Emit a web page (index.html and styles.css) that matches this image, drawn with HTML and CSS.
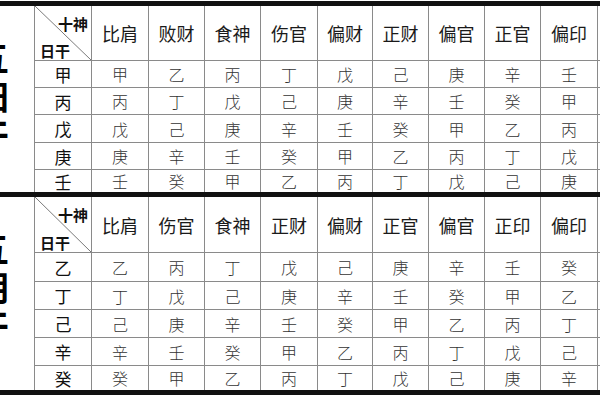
FILE: index.html
```html
<!DOCTYPE html>
<html lang="zh">
<head>
<meta charset="utf-8">
<link rel="stylesheet" href="styles.css">
</head>
<body>
<div class="page">
  <div class="thick"></div>
  <div class="section s1">
    <div class="label"><div class="label-text"><span>五</span><span>阳</span><span>干</span></div></div>
    <div class="grid g1">
      <div class="c diag"><span class="ss">十神</span><span class="rg">日干</span></div>
      <div class="c h">比肩</div><div class="c h">败财</div><div class="c h">食神</div><div class="c h">伤官</div><div class="c h">偏财</div><div class="c h">正财</div><div class="c h">偏官</div><div class="c h">正官</div><div class="c h">偏印</div><div class="c e"></div>
      <div class="c r">甲</div><div class="c">甲</div><div class="c">乙</div><div class="c">丙</div><div class="c">丁</div><div class="c">戊</div><div class="c">己</div><div class="c">庚</div><div class="c">辛</div><div class="c">壬</div><div class="c e"></div>
      <div class="c r">丙</div><div class="c">丙</div><div class="c">丁</div><div class="c">戊</div><div class="c">己</div><div class="c">庚</div><div class="c">辛</div><div class="c">壬</div><div class="c">癸</div><div class="c">甲</div><div class="c e"></div>
      <div class="c r">戊</div><div class="c">戊</div><div class="c">己</div><div class="c">庚</div><div class="c">辛</div><div class="c">壬</div><div class="c">癸</div><div class="c">甲</div><div class="c">乙</div><div class="c">丙</div><div class="c e"></div>
      <div class="c r">庚</div><div class="c">庚</div><div class="c">辛</div><div class="c">壬</div><div class="c">癸</div><div class="c">甲</div><div class="c">乙</div><div class="c">丙</div><div class="c">丁</div><div class="c">戊</div><div class="c e"></div>
      <div class="c r">壬</div><div class="c">壬</div><div class="c">癸</div><div class="c">甲</div><div class="c">乙</div><div class="c">丙</div><div class="c">丁</div><div class="c">戊</div><div class="c">己</div><div class="c">庚</div><div class="c e"></div>
    </div>
  </div>
  <div class="thick"></div>
  <div class="section s2">
    <div class="label"><div class="label-text"><span>五</span><span>阴</span><span>干</span></div></div>
    <div class="grid g2">
      <div class="c diag"><span class="ss">十神</span><span class="rg">日干</span></div>
      <div class="c h">比肩</div><div class="c h">伤官</div><div class="c h">食神</div><div class="c h">正财</div><div class="c h">偏财</div><div class="c h">正官</div><div class="c h">偏官</div><div class="c h">正印</div><div class="c h">偏印</div><div class="c e"></div>
      <div class="c r">乙</div><div class="c">乙</div><div class="c">丙</div><div class="c">丁</div><div class="c">戊</div><div class="c">己</div><div class="c">庚</div><div class="c">辛</div><div class="c">壬</div><div class="c">癸</div><div class="c e"></div>
      <div class="c r">丁</div><div class="c">丁</div><div class="c">戊</div><div class="c">己</div><div class="c">庚</div><div class="c">辛</div><div class="c">壬</div><div class="c">癸</div><div class="c">甲</div><div class="c">乙</div><div class="c e"></div>
      <div class="c r">己</div><div class="c">己</div><div class="c">庚</div><div class="c">辛</div><div class="c">壬</div><div class="c">癸</div><div class="c">甲</div><div class="c">乙</div><div class="c">丙</div><div class="c">丁</div><div class="c e"></div>
      <div class="c r">辛</div><div class="c">辛</div><div class="c">壬</div><div class="c">癸</div><div class="c">甲</div><div class="c">乙</div><div class="c">丙</div><div class="c">丁</div><div class="c">戊</div><div class="c">己</div><div class="c e"></div>
      <div class="c r">癸</div><div class="c">癸</div><div class="c">甲</div><div class="c">乙</div><div class="c">丙</div><div class="c">丁</div><div class="c">戊</div><div class="c">己</div><div class="c">庚</div><div class="c">辛</div><div class="c e"></div>
    </div>
  </div>
  <div class="thick"></div>
</div>
</body>
</html>
```

FILE: styles.css
```css
html, body {
  margin: 0;
  padding: 0;
  background: #fff;
}

body {
  font-family: "Noto Sans CJK SC", "Noto Sans", sans-serif;
  color: #222;
}

.page {
  width: 600px;
  padding-top: 1px;
  overflow: hidden;
}

.thick {
  height: 5px;
  background: #111;
}

.section {
  display: flex;
}

.s1 { height: 186px; }
.s2 { height: 193px; }

.label {
  width: 35px;
  flex: none;
  box-sizing: border-box;
  border-right: 1px solid #8a8a8a;
  overflow: hidden;
}

.label-text {
  margin-left: -25px;
  padding-top: 31px;
  display: flex;
  flex-direction: column;
  font-size: 34px;
  line-height: 39px;
  font-weight: 700;
  color: #000;
  width: 34px;
}

.grid {
  flex: 1;
  display: grid;
  grid-template-columns: 57px 57px 56px 56px 57px 55px 56px 56px 56px 57px 1fr;
}

.g1 { grid-template-rows: 55px 27px 27px 28px 27px 22px; }
.g2 { grid-template-rows: 56px 29px 28px 28px 28px 24px; }

.c {
  box-sizing: border-box;
  border-right: 1px solid #8a8a8a;
  border-bottom: 1px solid #8a8a8a;
  display: flex;
  align-items: center;
  justify-content: center;
  font-size: 16px;
  font-weight: 300;
  color: #333;
  line-height: 1;
}

.grid > .c:nth-last-child(-n+11) {
  border-bottom: none;
}

.c.e {
  border-right: none;
}

.c.h {
  font-size: 18px;
  font-weight: 400;
  color: #1a1a1a;
}

.c.r {
  font-size: 17px;
  font-weight: 400;
  color: #111;
}

.c.diag {
  flex-direction: column;
  align-items: stretch;
  justify-content: space-between;
  padding: 10px 3px 2px 5px;
  font-size: 15px;
  font-weight: 700;
  color: #111;
  background: linear-gradient(to top right, transparent calc(50% - 0.7px), #777 50%, transparent calc(50% + 0.7px));
}

.ss {
  align-self: flex-end;
}

.rg {
  align-self: flex-start;
}
```
